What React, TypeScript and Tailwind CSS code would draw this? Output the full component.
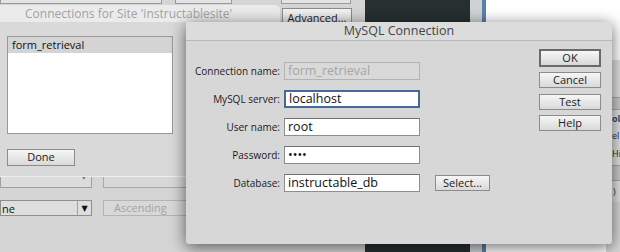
import React from 'react';

const FONT = { fontFamily: '"Open Sans", "DejaVu Sans", sans-serif' };

function MacButton({ label, primary = false, className = '' }: { label: string; primary?: boolean; className?: string }) {
  return (
    <div
      className={`flex items-center justify-center bg-gradient-to-b from-[#f6f6f6] to-[#d9d9d9] text-[11px] text-[#222] ${
        primary ? 'border-2 border-[#6a6a6a]' : 'border border-[#8c8c8c]'
      } ${className}`}
    >
      {label}
    </div>
  );
}

function Field({
  label,
  value,
  kind = 'normal',
}: {
  label: string;
  value: string;
  kind?: 'normal' | 'disabled' | 'focus';
}) {
  const box =
    kind === 'disabled'
      ? 'bg-[#d9d9d9] border border-[#b3b3b3] text-[#a6a6a6]'
      : kind === 'focus'
      ? 'bg-white border-2 border-[#46699a] text-[#111] -mx-[1px]'
      : 'bg-white border border-[#8e8e8e] border-t-[#6f6f6f] text-[#111]';
  return (
    <div className="flex h-[18px] items-center">
      <div className="w-[96px] pr-[2px] text-right text-[10px] text-[#1a1a1a]">{label}</div>
      <div className={`ml-[2px] flex h-[18px] w-[136px] items-center px-[3px] text-[12.5px] leading-none ${box}`}>
        {value}
      </div>
    </div>
  );
}

export default function App() {
  return (
    <div className="relative h-[252px] w-[620px] overflow-hidden bg-[#d5d5d5]" style={FONT}>
      {/* background app, top strip */}
      <div className="absolute left-0 top-0 flex h-[6px] w-[365px]">
        <div className="h-[4px] w-[162px] border border-t-0 border-[#9a9a9a] bg-[#e4e4e4]" />
        <div className="ml-[13px] h-[4px] w-[57px] border border-t-0 border-[#9a9a9a] bg-[#e4e4e4]" />
        <div className="ml-[49px] h-[4px] w-[70px] border border-t-0 border-[#9a9a9a] bg-[#e4e4e4]" />
      </div>
      <div className="absolute left-[282px] top-[8px] flex h-[18px] w-[70px] items-start justify-center border border-[#8c8c8c] bg-gradient-to-b from-[#f4f4f4] to-[#dcdcdc] pt-[1px] text-[11px] text-[#222]">
        Advanced...
      </div>
      <div className="absolute left-[365px] top-0 h-[252px] w-[105px] bg-[#263030]" />
      <div className="absolute left-[470px] top-0 h-[252px] w-[12px] bg-[#cfd3d6]" />
      <div className="absolute left-[482px] top-0 h-[252px] w-[4px] bg-[#5d80aa]" />
      <div className="absolute left-[486px] top-0 h-[252px] w-[134px] bg-white" />

      {/* right background strip */}
      <div className="absolute left-[606px] top-[60px] flex h-[192px] w-[14px] flex-col bg-[#e2e2e2] text-[9px] leading-none">
        <div className="mt-[37px] h-[13px] border-y border-[#a8a8a8] bg-[#cacaca]" />
        <div className="mt-[4px] h-[14px] pl-[6px] font-bold text-[#2d4f78]">ol</div>
        <div className="mt-[3px] h-[14px] pl-[6px] text-[#333]">el</div>
        <div className="mt-[4px] h-[14px] pl-[6px] text-[#222]">Hi</div>
        <div className="mt-[2px] h-[16px] border-y border-[#a8a8a8] bg-[#cacaca]" />
        <div className="mt-[6px] pl-[7px] text-[#333]">)</div>
        <div className="mt-[6px] flex-1 bg-[#d6d6d6]" />
      </div>

      {/* background form controls under sheet */}
      <div className="absolute left-0 top-[166px] flex w-[190px] flex-col gap-[12px]">
        <div className="flex gap-[11px]">
          <div className="flex h-[22px] w-[92px] items-end justify-end border border-[#9e9e9e] bg-[#dcdcdc] pb-[5px] pr-[4px] text-[8px] text-[#777]">
            ▼
          </div>
          <div className="h-[22px] w-[84px] border border-[#a8a8a8] bg-[#d8d8d8]" />
        </div>
        <div className="flex gap-[11px]">
          <div className="flex h-[16px] w-[92px] items-center border border-[#8e8e8e] bg-[#dedede] text-[11px] text-[#111]">
            <span className="flex-1 pl-[1px] leading-none">ne</span>
            <span className="flex h-full w-[14px] items-center justify-center border-l border-[#a0a0a0] text-[8px]">▼</span>
          </div>
          <div className="flex h-[16px] w-[84px] items-center border border-[#b4b4b4] bg-[#d8d8d8] pl-[10px] text-[11px] text-[#a4a4a4]">
            Ascending
          </div>
        </div>
      </div>

      {/* connections sheet */}
      <div className="absolute left-0 top-[5px] flex h-[171px] w-[280px] flex-col rounded-tr-[5px] bg-[#d9d9d9] shadow-[0_1px_0_#eeeeee]">
        <div className="flex h-[17px] items-center rounded-tr-[5px] bg-[#ebebeb] pl-[25px] text-[12px] text-[#a2a2a2]">
          Connections for Site 'instructablesite'
        </div>
        <div className="ml-[7px] mt-[14px] h-[98px] w-[166px] border border-[#9a9a9a] bg-white">
          <div className="flex h-[16px] items-center bg-[#d4d4d4] pl-[4px] text-[11px] text-[#111]">form_retrieval</div>
        </div>
        <MacButton label="Done" className="ml-[7px] mt-[15px] h-[17px] w-[68px]" />
      </div>

      {/* MySQL Connection dialog */}
      <div className="absolute left-[186px] top-[22px] flex h-[222px] w-[426px] flex-col rounded-[3px] bg-[#d7d7d7] shadow-[0_3px_16px_rgba(0,0,0,0.6)]">
        <div className="flex h-[19px] items-center justify-center border-b border-[#b9b9b9] bg-[#dcdcdc] text-[12.5px] text-[#444]">
          MySQL Connection
        </div>
        <div className="flex flex-1">
          <div className="flex flex-1 flex-col gap-[10px] pt-[21px]">
            <Field label="Connection name:" value="form_retrieval" kind="disabled" />
            <Field label="MySQL server:" value="localhost" kind="focus" />
            <Field label="User name:" value="root" />
            <Field label="Password:" value="••••" />
            <div className="flex items-center">
              <Field label="Database:" value="instructable_db" />
              <MacButton label="Select..." className="ml-[15px] h-[16px] w-[55px]" />
            </div>
          </div>
          <div className="mr-[11px] flex w-[62px] flex-col gap-[5px] pt-[8px]">
            <MacButton label="OK" primary className="h-[18px]" />
            <MacButton label="Cancel" className="h-[16px]" />
            <MacButton label="Test" className="mt-[1px] h-[16px]" />
            <MacButton label="Help" className="h-[16px]" />
          </div>
        </div>
      </div>
    </div>
  );
}
